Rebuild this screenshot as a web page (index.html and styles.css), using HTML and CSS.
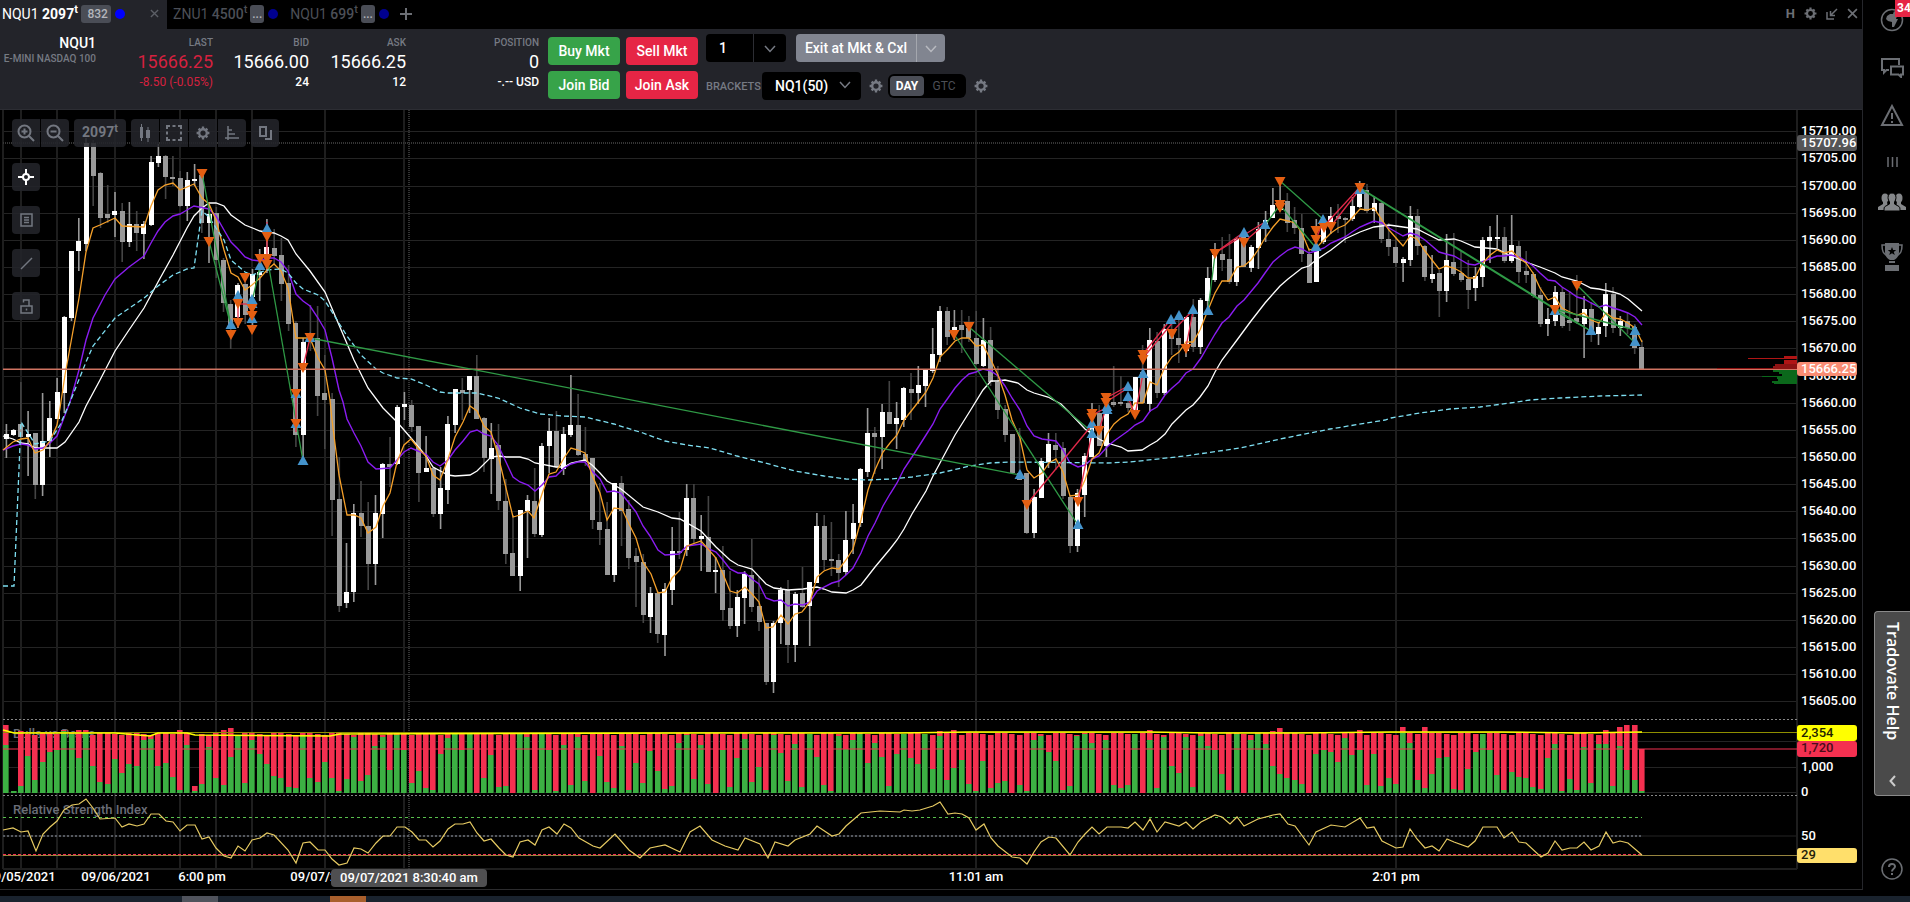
FILE: index.html
```html
<!DOCTYPE html>
<html lang="en">
<head>
    <meta charset="UTF-8">
    <meta name="viewport" content="width=device-width, initial-scale=1.0">
    <title>NQU1 2097t</title>
    <link rel="stylesheet" href="styles.css">
</head>
<body>

    <!-- Shared icon shapes -->
    <svg class="icon-defs" width="0" height="0">
        <symbol id="gear" viewBox="0 0 24 24">
            <path fill="none" stroke="currentColor" stroke-width="4" d="M12 5.500a6.500 6.500 0 1 0 0 13a6.500 6.500 0 1 0 0-13z"/>
            <path fill="none" stroke="currentColor" stroke-width="4" d="M12 1v4M12 19v4M1 12h4M19 12h4M4.500 4.500l2.500 2.500M17 17l2.500 2.500M4.500 19.500l2.500-2.500M17 7l2.500-2.500"/>
        </symbol>
        <symbol id="chevron" viewBox="0 0 12 8">
            <path fill="none" stroke="currentColor" stroke-width="1.500" d="M1 1l5 5.500l5-5.500"/>
        </symbol>
        <symbol id="cross" viewBox="0 0 10 10">
            <path fill="none" stroke="currentColor" stroke-width="1.500" d="M1 1l8 8M9 1l-8 8"/>
        </symbol>
    </svg>

    <div class="app">
        <main class="workspace">
            <nav class="tabs">
                <div class="tab active">
                    <span>NQU1 <b>2097<sup>t</sup></b></span>
                    <span class="count">832</span>
                    <i class="dot"></i>
                    <button class="close" aria-label="Close tab"><svg width="9" height="9"><use href="#cross"/></svg></button>
                </div>
                <div class="tab">
                    <span>ZNU1 <b>4500<sup>t</sup></b></span>
                    <span class="count small">...</span>
                    <i class="dot"></i>
                </div>
                <div class="tab">
                    <span>NQU1 <b>699<sup>t</sup></b></span>
                    <span class="count small">...</span>
                    <i class="dot"></i>
                </div>
                <button class="add" aria-label="Add tab"><svg width="12" height="12" viewBox="0 0 12 12"><path stroke="currentColor" stroke-width="2" d="M6 0v12M0 6h12"/></svg></button>
                <div class="window-tools">
                    <button>H</button>
                    <button aria-label="Settings"><svg width="13" height="13"><use href="#gear"/></svg></button>
                    <button aria-label="Collapse"><svg width="12" height="12" viewBox="0 0 12 12"><path fill="none" stroke="currentColor" stroke-width="1.500" d="M1 4v7h7M11 1L4.500 7.500M4.500 3v4.500H9"/></svg></button>
                    <button aria-label="Close"><svg width="11" height="11"><use href="#cross"/></svg></button>
                </div>
            </nav>

            <header class="ticket">
                <div class="quotes">
                    <div class="quote">
                        <strong>NQU1</strong>
                        <span class="product">E-MINI NASDAQ 100</span>
                    </div>
                    <div class="quote down">
                        <span class="label">LAST</span>
                        <span class="value">15666.25</span>
                        <span class="sub">-8.50 (-0.05%)</span>
                    </div>
                    <div class="quote">
                        <span class="label">BID</span>
                        <span class="value">15666.00</span>
                        <span class="sub">24</span>
                    </div>
                    <div class="quote">
                        <span class="label">ASK</span>
                        <span class="value">15666.25</span>
                        <span class="sub">12</span>
                    </div>
                    <div class="quote">
                        <span class="label">POSITION</span>
                        <span class="value">0</span>
                        <span class="sub">-.-- USD</span>
                    </div>
                </div>

                <div class="orders">
                    <button class="buy">Buy Mkt</button>
                    <button class="sell">Sell Mkt</button>
                    <button class="buy">Join Bid</button>
                    <button class="sell">Join Ask</button>
                </div>

                <div class="options">
                    <div class="row">
                        <div class="qty">
                            <input type="text" value="1" aria-label="Quantity">
                            <button aria-label="Choose quantity"><svg width="12" height="8"><use href="#chevron"/></svg></button>
                        </div>
                        <div class="exit">
                            <button>Exit at Mkt &amp; Cxl</button>
                            <button aria-label="More exit orders"><svg width="12" height="8"><use href="#chevron"/></svg></button>
                        </div>
                    </div>
                    <div class="row">
                        <label class="brackets" for="brackets">BRACKETS</label>
                        <div class="select">
                            <select id="brackets"><option>NQ1(50)</option></select>
                            <svg width="12" height="8"><use href="#chevron"/></svg>
                        </div>
                        <button class="gear" aria-label="Bracket settings"><svg width="14" height="14"><use href="#gear"/></svg></button>
                        <div class="tif">
                            <input type="radio" name="tif" id="tif-day" checked><label for="tif-day">DAY</label>
                            <input type="radio" name="tif" id="tif-gtc"><label for="tif-gtc">GTC</label>
                        </div>
                        <button class="gear" aria-label="Order settings"><svg width="14" height="14"><use href="#gear"/></svg></button>
                    </div>
                </div>
            </header>

            <section class="chart">
                <svg id="plot" viewBox="0 110 1862 779" preserveAspectRatio="xMinYMin meet"></svg>

                <div class="chart-tools">
                    <div class="group">
                        <button aria-label="Zoom in"><svg width="18" height="18" viewBox="0 0 18 18"><g fill="none" stroke="currentColor" stroke-width="2"><circle cx="7.500" cy="7.500" r="6"/><path d="M12 12l5 5M7.500 4.500v6M4.500 7.500h6"/></g></svg></button>
                        <button aria-label="Zoom out"><svg width="18" height="18" viewBox="0 0 18 18"><g fill="none" stroke="currentColor" stroke-width="2"><circle cx="7.500" cy="7.500" r="6"/><path d="M12 12l5 5M4.500 7.500h6"/></g></svg></button>
                    </div>
                    <div class="group">
                        <button class="interval">2097<sup>t</sup></button>
                    </div>
                    <div class="group">
                        <button aria-label="Chart type"><svg width="12" height="18" viewBox="0 0 12 18"><path fill="currentColor" d="M1 3h3v11H1zM2 0h1v17H2zM7 6h4v8H7zM8.500 3h1v15h-1z"/></svg></button>
                        <button aria-label="Select area"><svg width="16" height="16" viewBox="0 0 16 16"><path fill="none" stroke="currentColor" stroke-width="2" d="M1 4V1h3M6.500 1h3M12 1h3v3M15 6.500v3M15 12v3h-3M9.500 15h-3M4 15H1v-3M1 9.500v-3"/></svg></button>
                        <button aria-label="Chart settings"><svg width="14" height="14"><use href="#gear"/></svg></button>
                        <button aria-label="Price levels"><svg width="14" height="14" viewBox="0 0 14 14"><path fill="none" stroke="currentColor" stroke-width="1.500" d="M3 0v14M0 12h14M3 4h4M3 8h7"/></svg></button>
                    </div>
                    <div class="group">
                        <button aria-label="Layers"><svg width="13" height="14" viewBox="0 0 13 14"><path fill="none" stroke="currentColor" stroke-width="2" d="M1 1h6v9H1zM12 4v9H6"/></svg></button>
                    </div>
                </div>

                <div class="draw-tools">
                    <button class="on" aria-label="Crosshair"><svg width="16" height="16" viewBox="0 0 16 16"><g fill="none" stroke="currentColor" stroke-width="2"><circle cx="8" cy="8" r="3"/><path d="M8 0v5M8 11v5M0 8h5M11 8h5"/></g></svg></button>
                    <button aria-label="Data box"><svg width="13" height="14" viewBox="0 0 13 14"><path fill="none" stroke="currentColor" stroke-width="1.500" d="M1 1h11v12H1zM4 4.500h5M4 7h5M4 9.500h5"/></svg></button>
                    <button aria-label="Draw line"><svg width="13" height="13" viewBox="0 0 13 13"><path stroke="currentColor" stroke-width="1.500" d="M1 12L12 1"/></svg></button>
                    <button aria-label="Lock drawings"><svg width="13" height="15" viewBox="0 0 13 15"><path fill="none" stroke="currentColor" stroke-width="1.500" d="M1 7h11v7H1zM3.500 3.500V1h5.500v6M6.500 9.500v2"/></svg></button>
                </div>
            </section>
        </main>

        <aside class="sidebar">
            <button aria-label="News"><svg width="24" height="24" viewBox="0 0 24 24"><circle cx="12" cy="12" r="10.500" fill="none" stroke="currentColor" stroke-width="1.500"/><path fill="currentColor" d="M7 8l3-2h4l3 2l-1 3h2l-2 4l-2 4h-2v-5l-4-1l-2-2zM14 3l3 2l-1 2l-3-1z"/></svg><span class="badge">34</span></button>
            <button aria-label="Chat"><svg width="24" height="20" viewBox="0 0 24 20"><path fill="none" stroke="currentColor" stroke-width="2" d="M19 7V1H2v11h2v2.500l2.500-2.500H9M11 8.500h12v8h-2v2.500l-2.500-2.500H11z"/></svg></button>
            <button aria-label="Alerts"><svg width="24" height="23" viewBox="0 0 24 23"><path fill="none" stroke="currentColor" stroke-width="2" d="M12 2L2 21h20zM12 9v6M12 17v2"/></svg></button>
            <button aria-label="Columns"><svg width="11" height="10" viewBox="0 0 11 10"><path stroke="currentColor" stroke-width="1.500" d="M1 0v10M5.500 0v10M10 0v10"/></svg></button>
            <button class="community" aria-label="Community"><svg width="28" height="18" viewBox="0 0 28 18"><g fill="currentColor"><ellipse cx="7" cy="5" rx="3.500" ry="4.500"/><ellipse cx="21" cy="5" rx="3.500" ry="4.500"/><path d="M0 17v-3l5-3V8h4l1 9zM28 17v-3l-5-3V8h-4l-1 9z"/></g><path fill="currentColor" stroke="#000" stroke-width="1" d="M14 0c2.500 0 4 1.800 4 4.500c0 2-1 3.500-1.500 4.500v2l4.500 2.500c.8.500 1 1.500 1 4.500H6c0-3 .2-4 1-4.500l4.500-2.500V9C11 8 10 6.500 10 4.500C10 1.800 11.500 0 14 0z"/></svg></button>
            <button class="trophy" aria-label="Contests"><svg width="22" height="28" viewBox="0 0 22 28"><path fill="none" stroke="currentColor" stroke-width="1.500" d="M4 2H1c0 6 1 9 6 11M18 2h3c0 6-1 9-6 11"/><path fill="currentColor" d="M4 0h14v9c0 5-3 7-5 8h-4c-2-1-5-3-5-8zM8 18h6v2H8zM4 22h14v6H4z"/><path fill="#000" d="M11 4l1.200 3h3l-2.400 2l1 3l-2.800-1.800L8.200 12l1-3l-2.400-2h3z"/></svg></button>
            <button class="help-tab">Tradovate Help<svg width="7" height="12" viewBox="0 0 7 12"><path fill="none" stroke="#ccc" stroke-width="2" d="M6 1L1.500 6L6 11"/></svg></button>
            <button class="question" aria-label="Help"><svg width="22" height="22" viewBox="0 0 22 22"><g fill="none" stroke="currentColor"><circle cx="11" cy="11" r="10" stroke-width="1.500"/><path stroke-width="2" d="M8 9c0-4 6-4 6-.5c0 2.500-3 2-3 5M11 15v2"/></g></svg></button>
        </aside>
    </div>

    <footer class="taskbar">
        <span class="task"></span>
        <span class="task orange"></span>
    </footer>

    <script src="chart.js"></script>
</body>
</html>
```

FILE: styles.css
```css
* {
    box-sizing: border-box;
}

body {
    margin: 0;
    min-height: 100vh;
    display: flex;
    flex-direction: column;
    background: #000;
    color: #fff;
    font-family: Roboto, "Liberation Sans", sans-serif;
    font-size: 14px;
    overflow: hidden;
}

button, input, select {
    font: inherit;
    color: inherit;
    border: none;
    padding: 0;
    margin: 0;
    background: none;
}

.icon-defs {
    position: absolute;
}

.app {
    flex: 1;
    display: flex;
}

.workspace {
    flex: 1;
    min-width: 0;
    border-right: 1px solid #25262b;
    border-bottom: 1px solid #2c2c2e;
}

/* Tabs */
.tabs {
    height: 29px;
    display: flex;
    align-items: stretch;
    color: #4c4f57;
}

.tab {
    display: flex;
    align-items: center;
    gap: 3px;
    padding: 0 0 2px 12px;
}

.tab:nth-child(2) {
    padding-left: 6px;
}

.tab b {
    font-weight: 500;
}

.tab sup {
    font-size: 11px;
    line-height: 0;
}

.tab.active {
    width: 167px;
    padding-left: 2px;
    background: #23242a;
    color: #fff;
}

.active b {
    font-weight: 700;
}

.count {
    height: 18px;
    width: 30px;
    padding-right: 3px;
    border-radius: 3px;
    background: #4a4d56;
    color: #b4b6bc;
    font-size: 12px;
    font-weight: 500;
    line-height: 18px;
    text-align: right;
}

.count.small {
    width: 14px;
    padding: 0;
    text-align: center;
}

.dot {
    width: 10px;
    height: 10px;
    margin-left: 1px;
    border-radius: 50%;
    background: #000090;
}

.active .dot {
    background: #0000ff;
}

.close {
    display: flex;
    margin: 0 8px 0 auto;
    color: #5c5f66;
}

.add {
    display: flex;
    align-items: center;
    margin-left: 11px;
    padding-bottom: 2px;
    color: #6c6f75;
}

.window-tools {
    display: flex;
    align-items: center;
    gap: 9px;
    margin-left: auto;
    padding: 0 4px 2px 0;
    color: #6c6f75;
}

.window-tools button {
    display: flex;
    font-size: 13px;
    font-weight: 700;
}

/* Order ticket */
.ticket {
    height: 81px;
    display: flex;
    background: #23242a;
    border-bottom: 1px solid #2c2d33;
}

.quotes {
    display: grid;
    grid-template-columns: 96px 117px 96px 97px 133px;
    padding-top: 5px;
    font-weight: 500;
}

.quote {
    display: flex;
    flex-direction: column;
    align-items: flex-end;
    white-space: nowrap;
}

.quote strong {
    line-height: 18px;
    font-weight: 500;
}

.product, .label {
    color: #767a83;
    font-size: 10px;
}

.product {
    line-height: 14px;
}

.label {
    line-height: 18px;
}

.value {
    font-size: 18px;
    font-weight: 400;
    line-height: 20px;
}

.sub {
    font-size: 12px;
    line-height: 20px;
}

.down .value, .down .sub {
    color: #d5213f;
    font-weight: 400;
}

.orders {
    display: grid;
    grid-template-columns: 72px 72px;
    grid-auto-rows: 28px;
    gap: 6px;
    padding: 8px 8px 0 9px;
    font-weight: 500;
}

.orders button {
    border-radius: 4px;
}

.buy {
    background: #37a349;
}

.sell {
    background: #e62545;
}

.options {
    display: flex;
    flex-direction: column;
    gap: 10px;
    padding-top: 5px;
}

.row {
    display: flex;
    align-items: center;
    height: 28px;
}

.qty, .exit {
    display: flex;
    height: 28px;
    border-radius: 4px;
    overflow: hidden;
    font-weight: 500;
}

.qty {
    margin-right: 10px;
    background: #000;
    color: #767a83;
}

.qty input {
    width: 48px;
    padding-left: 13px;
    border-right: 1px solid #2c2d33;
    color: #fff;
}

.qty button {
    width: 32px;
}

.exit {
    background: #818590;
}

.exit button:first-child {
    width: 121px;
    border-right: 1px solid #a4a7ae;
}

.exit button:last-child {
    width: 28px;
    color: #b8bac0;
}

.brackets {
    width: 56px;
    color: #767a83;
    font-size: 11px;
    font-weight: 500;
}

.select {
    position: relative;
    color: #767a83;
}

.select select {
    width: 99px;
    height: 28px;
    padding-left: 13px;
    border-radius: 4px;
    appearance: none;
    background: #000;
    color: #fff;
    font-weight: 500;
}

.select svg {
    position: absolute;
    top: 9px;
    right: 10px;
    pointer-events: none;
}

.gear {
    display: flex;
    padding: 0 5px 0 8px;
    color: #767a83;
}

.tif {
    display: flex;
    width: 78px;
    height: 24px;
    padding: 2px;
    border-radius: 6px;
    background: #000;
    font-size: 12px;
}

.tif input {
    position: absolute;
    opacity: 0;
}

.tif label {
    flex: 1;
    border-radius: 4px;
    color: #4c4f57;
    line-height: 20px;
    text-align: center;
}

.tif input:checked + label {
    flex: 0 0 34px;
    background: #4a4d56;
    color: #fff;
    font-weight: 700;
}

/* Chart */
.chart {
    position: relative;
}

#plot {
    display: block;
    width: 100%;
    font-size: 13px;
    font-weight: 500;
    fill: #fff;
}

.chart-tools, .draw-tools {
    position: absolute;
    top: 9px;
    left: 12px;
    display: flex;
    gap: 5px;
    color: #737780;
}

.draw-tools {
    top: 53px;
    flex-direction: column;
    gap: 15px;
}

.group {
    display: flex;
    gap: 1px;
    border-radius: 4px;
    overflow: hidden;
}

.chart-tools button, .draw-tools button {
    display: flex;
    align-items: center;
    justify-content: center;
    width: 28px;
    height: 28px;
    background: rgba(35, 36, 42, 0.88);
}

.draw-tools button {
    border-radius: 4px;
}

.draw-tools .on {
    color: #fff;
}

.chart-tools .interval {
    width: 52px;
    padding-bottom: 2px;
    font-size: 14px;
    font-weight: 700;
}

.interval sup {
    align-self: flex-start;
    font-size: 11px;
    line-height: 20px;
}

/* Right sidebar */
.sidebar {
    width: 47px;
    display: flex;
    flex-direction: column;
    align-items: center;
    padding: 8px 0 0 11px;
    color: #6b6e73;
    overflow: hidden;
}

.sidebar button {
    position: relative;
    display: flex;
    flex: none;
    margin-bottom: 26px;
}

.sidebar button:nth-child(3) {
    margin-bottom: 30px;
}

.badge {
    position: absolute;
    top: -8px;
    left: 15px;
    height: 17px;
    padding: 0 2px;
    background: #e62545;
    color: #fff;
    font-size: 12px;
    font-weight: 700;
    line-height: 17px;
}

.sidebar .community {
    margin-bottom: 32px;
    color: #85878a;
}

.sidebar .help-tab {
    width: 36px;
    height: 185px;
    margin: auto 0 62px;
    padding: 10px 0 8px;
    align-items: center;
    justify-content: space-between;
    flex-direction: row;
    writing-mode: vertical-rl;
    border: 1px solid #8a8a8a;
    border-right: none;
    border-radius: 4px 0 0 4px;
    background: #4a4a4a;
    color: #fff;
    font-family: "Open Sans", sans-serif;
    font-size: 16px;
    font-weight: 600;
}

.sidebar .question {
    margin-bottom: 10px;
}

.taskbar {
    display: flex;
    gap: 112px;
    height: 6px;
    margin-top: 6px;
    padding-left: 182px;
    background: #1a232e;
}

.task {
    width: 36px;
    background: #50535c;
}

.task.orange {
    background: #a95f2c;
}
```

FILE: chart.js
```js
// One candle per entry: colour (w = up, g = down), high, body top, body bottom, low
const candles = `
w424,434,439,458 w429,430,435,436 g382,424,437,443 w411,434,437,476 g433,433,485,499 w393,441,485,496 w401,418,441,457 w378,392,419,419 w316,317,393,413 w251,251,318,321
w218,241,251,271 w138,143,244,251 g140,143,176,206 g172,173,218,228 g185,214,218,223 w192,211,215,237 g203,211,242,262 w202,224,242,247 g211,224,233,251 w221,224,234,259
w156,162,225,226 w144,156,163,167 g155,156,177,199 g156,177,179,186 g171,178,206,207 w172,180,206,221 w164,179,181,186 g173,175,223,233 w204,214,223,263 g207,213,260,278
g258,260,303,312 g300,304,325,349 w283,285,317,328 g278,284,315,324 w269,274,297,330 w249,272,275,301 w219,247,258,273 g229,248,256,265 g238,255,284,301 g265,283,324,331
g321,323,435,447 w338,342,435,457 g305,335,342,351 g306,338,396,416 g355,393,400,449 g393,399,500,536 g457,499,606,612 w543,592,603,608 w504,513,592,602 g481,513,526,537
g502,526,564,590 w495,513,564,585 w463,464,514,538 g437,464,467,487 w405,407,464,465 w392,404,407,420 g400,405,427,432 g426,426,473,502 w436,468,472,472 g467,468,514,517
w467,488,514,529 w416,424,490,504 w389,389,425,433 g378,390,393,420 w376,376,390,413 g355,376,419,419 g417,418,458,472 w423,448,459,494 g424,445,501,510 g479,501,554,564
g515,553,576,576 w510,510,576,591 w495,500,511,558 g468,501,534,537 w443,446,535,537 w418,431,446,473 g411,431,467,468 w427,434,469,475 w375,425,435,437 g394,425,455,456
g427,454,460,466 g458,458,520,529 g483,522,530,545 g502,529,575,575 w483,483,575,582 g476,483,511,546 g500,509,558,569 g548,556,562,607 g554,562,615,623 w587,593,617,633
g591,593,634,643 w583,589,635,656 w527,551,590,605 g512,551,553,559 w484,498,550,556 g484,498,539,543 w515,536,539,571 g496,537,572,572 w557,570,572,593 g546,570,610,621
g571,608,626,629 w590,597,626,637 w571,574,598,624 g539,575,607,612 g577,606,622,631 g623,623,682,685 w621,623,682,693 w587,590,623,644 g580,590,645,663 w592,594,645,662
g567,593,607,608 w582,582,606,646 w513,526,583,583 g515,526,560,570 g522,559,561,576 g554,560,573,587 w511,540,572,575 w504,523,539,554 w468,469,523,527 w408,433,472,477
g427,433,437,474 w404,412,437,469 g381,412,424,424 w402,418,424,449 w387,388,420,427 g373,389,393,420 w366,385,393,404 w370,370,386,407 w328,354,371,373 w306,311,355,362
g307,311,337,345 w310,327,333,340 g310,325,330,353 g316,328,338,342 g311,338,364,365 w318,340,366,367 g327,340,382,386 g366,382,410,419 g405,409,435,442 g434,434,473,473
g428,473,480,480 g473,473,533,534 w489,497,533,538 w458,461,498,498 w433,444,462,468 g433,445,450,470 g442,448,496,499 g495,497,546,553 w489,493,546,552 w453,456,495,517
w403,427,457,457 g405,413,446,446 w408,412,446,457 g366,402,405,407 g376,402,404,406 g393,403,408,412 w377,377,410,412 g345,372,403,403 w328,340,404,412 g332,341,393,398
w324,329,393,395 g322,330,339,355 g319,338,345,363 w317,317,351,357 g299,317,347,352 w298,300,347,354 w267,278,301,310 w243,255,280,282 g237,254,260,271 g234,259,282,284
w237,239,282,286 g233,235,267,267 w245,247,268,272 w222,229,248,269 w211,220,229,242 w188,205,218,218 w180,203,210,210 g193,201,223,232 g207,220,228,234 g214,228,254,262
g248,254,283,283 w219,247,282,282 w218,227,242,244 w207,216,227,234 g204,216,219,233 g217,218,220,243 w197,206,219,221 w181,190,207,208 g184,190,211,213 w196,203,211,223
g202,203,239,243 g223,239,247,256 g237,247,263,267 w257,259,263,282 w206,216,260,266 g209,216,246,255 g245,246,277,281 w255,274,279,283 g270,273,291,317 w234,260,291,302
g233,262,274,276 g250,273,280,282 g260,279,290,309 w267,276,288,301 w237,240,277,287 w226,237,241,263 w215,237,239,248 g227,237,261,263 w215,245,261,263 g241,246,272,283
g251,271,275,283 g272,274,296,298 g287,295,324,327 w308,319,324,336 w286,292,321,326 g287,292,326,328 g291,320,323,331 g275,318,322,324 w296,309,324,358 g302,309,330,342
w322,327,334,345 w283,294,326,337 g287,294,328,333 w316,321,328,336 g313,321,328,334 g324,327,348,354 g340,347,370,370`.trim().split(/\s+/);

// Moving averages
const fastMa = "3,450 13,442 21,439 28,438 35,453 43,450 50,441 57,425 60,408 65,375 79,298 86,252 93,228 100,225 115,218 122,226 144,227 151,206 158,190 165,185 173,183 180,190 194,184 202,198 209,204 216,220 224,250 231,273 238,277 245,290 252,285 260,278 267,270 274,264 281,271 288,288 296,338 310,338 318,358 325,370 330,400 332,420 339,475 347,515 354,515 361,518 368,533 376,527 383,506 390,493 397,462 404,445 411,439 418,448 426,456 433,475 440,480 448,459 455,437 463,422 470,406 477,411 484,426 491,432 498,455 513,517 520,515 528,511 534,518 542,494 549,474 556,472 564,458 571,448 578,450 585,453 592,475 600,493 607,520 614,508 622,509 629,524 636,538 643,562 651,574 658,593 665,592 672,578 680,570 687,546 701,541 709,550 716,558 723,574 730,591 737,593 745,587 752,594 759,602 766,628 773,627 781,615 788,624 795,614 802,612 810,602 817,577 824,571 832,568 839,569 846,560 853,549 861,520 868,490 875,470 883,452 890,443 897,435 904,420 912,410 919,401 926,392 933,378 940,357 948,349 955,341 962,338 969,338 976,346 983,345 991,360 998,375 1005,395 1012,420 1020,438 1027,470 1034,478 1042,473 1049,463 1056,459 1063,472 1070,496 1078,495 1085,480 1092,459 1099,453 1107,434 1114,424 1121,418 1128,414 1135,403 1143,403 1150,382 1157,385 1165,367 1172,357 1179,352 1186,342 1193,342 1200,330 1208,310 1215,293 1222,281 1229,281 1237,267 1244,266 1251,260 1258,250 1265,238 1273,227 1280,219 1288,221 1295,223 1302,233 1309,250 1316,248 1324,240 1331,233 1338,228 1345,225 1352,218 1360,209 1367,210 1374,208 1382,220 1389,230 1396,238 1403,246 1410,236 1417,239 1425,251 1432,260 1439,269 1446,266 1454,268 1461,272 1468,278 1475,278 1482,264 1489,256 1497,250 1504,253 1512,251 1519,258 1526,263 1533,273 1540,288 1548,300 1555,297 1562,308 1570,312 1577,315 1584,313 1591,320 1599,323 1606,313 1613,318 1620,319 1628,323 1635,328 1642,342";
const midMa = "3,450 13,446 21,444 28,445 35,449 43,448 50,443 57,436 65,415 70,402 79,370 86,340 93,318 105,295 115,279 129,267 144,256 151,243 158,231 165,222 173,216 180,214 187,210 194,206 209,209 216,216 224,230 231,242 238,249 245,257 252,260 260,261 267,258 274,258 281,262 288,271 296,294 303,301 310,306 318,318 325,330 332,358 339,390 343,402 347,419 354,433 361,446 368,462 376,469 390,468 397,460 404,452 411,448 418,451 426,454 433,462 440,466 448,460 455,450 463,441 470,432 477,430 484,434 491,436 498,445 506,462 513,477 520,482 528,485 535,491 542,485 549,477 556,476 564,468 571,464 578,462 585,462 592,471 600,479 607,492 614,491 621,493 629,503 636,512 643,526 650,536 658,550 665,555 679,554 687,546 701,544 709,549 716,552 723,560 730,569 738,573 745,573 752,579 759,584 766,598 774,601 781,600 788,606 795,604 803,605 810,602 817,591 824,587 832,583 839,581 846,575 853,568 861,553 868,536 875,523 883,506 890,494 897,483 904,469 912,457 919,446 926,435 933,424 940,409 948,398 955,388 962,380 969,374 976,372 983,369 991,371 998,376 1005,386 1012,398 1020,410 1027,426 1034,436 1042,439 1056,441 1063,450 1070,463 1078,467 1085,465 1092,459 1099,456 1107,447 1114,441 1121,436 1128,431 1135,425 1143,421 1150,411 1157,407 1165,395 1172,388 1179,382 1186,373 1193,369 1201,358 1208,346 1215,334 1222,323 1229,317 1237,306 1244,300 1258,283 1265,273 1273,262 1280,256 1288,250 1295,247 1302,249 1309,253 1316,251 1324,248 1331,243 1338,240 1345,237 1352,232 1360,227 1367,224 1374,221 1382,223 1389,228 1396,232 1403,236 1410,233 1417,235 1425,240 1432,246 1439,252 1446,254 1454,256 1461,260 1468,264 1475,265 1482,262 1489,259 1497,256 1504,256 1511,255 1519,257 1526,261 1533,266 1540,273 1548,280 1555,281 1562,287 1570,292 1577,297 1584,299 1591,303 1599,307 1606,305 1613,308 1620,310 1628,313 1635,317 1642,325";
const slowMa = "3,436 13,439 21,443 28,444 35,448 57,448 65,442 79,422 86,406 100,380 115,351 129,330 144,308 158,282 173,255 187,228 194,216 202,208 209,203 216,203 224,206 231,215 245,225 260,231 274,233 281,236 288,240 296,254 310,271 325,292 339,325 354,360 368,388 383,408 397,422 411,438 426,456 433,467 448,475 455,476 470,475 477,471 491,457 499,456 506,457 520,457 528,459 535,463 556,467 564,467 571,463 585,460 592,465 600,473 607,481 621,489 643,507 658,512 672,518 680,519 701,531 716,547 730,560 738,565 752,569 766,584 774,588 788,590 803,589 817,587 824,589 832,592 846,593 853,590 861,585 875,567 890,549 897,540 904,529 912,514 926,491 933,476 948,448 955,435 970,411 983,390 991,381 998,381 1005,380 1018,383 1027,390 1034,393 1048,397 1061,404 1070,413 1085,429 1099,439 1107,443 1121,447 1128,451 1142,450 1150,445 1157,441 1165,434 1172,424 1186,410 1193,405 1200,397 1208,386 1215,372 1222,360 1237,340 1251,321 1265,303 1280,286 1288,279 1302,268 1309,266 1316,260 1331,250 1345,239 1360,232 1374,227 1389,225 1396,226 1417,229 1425,233 1439,240 1454,239 1461,241 1475,247 1497,249 1511,256 1526,262 1540,267 1555,273 1562,277 1577,281 1591,288 1599,289 1613,292 1620,294 1628,299 1642,311";
const vwap = "3,586 14,586 21,422 35,444 50,441 60,425 70,402 86,362 93,346 115,318 144,298 158,286 173,275 187,269 194,268 202,211 209,217 216,228 224,240 231,260 245,272 252,275 267,270 281,269 288,273 296,283 303,289 318,295 325,301 332,312 347,336 361,355 376,369 383,373 397,378 411,379 426,385 440,392 448,393 477,393 498,398 520,408 540,414 563,416 585,417 614,424 643,433 665,441 687,445 710,448 737,456 765,463 795,471 824,476 846,479 868,480 890,479 912,477 940,473 970,466 990,463 1010,462 1107,463 1130,462 1185,456 1240,448 1285,438 1330,429 1385,420 1391,418 1420,413 1450,409 1480,407 1510,403 1530,400 1560,398 1600,396 1642,395";

// Trades: x1,y1,x2,y2
const wins = ["202,173 231,326", "209,241 231,326", "252,302 260,266", "268,262 303,461", "310,338 1020,475", "954,334 1078,525", "969,327 1092,432", "1208,310 1215,255", "1265,225 1280,205", "1280,181 1324,220", "1280,205 1316,248", "1577,285 1635,343", "1555,309 1591,331", "1555,309 1635,330", "1591,331 1555,311"];
const losses = ["303,367 310,338", "296,432 296,395", "238,320 238,296", "238,304 252,304", "267,222 267,258", "1027,504 1092,425", "1078,501 1092,433", "1092,415 1106,408", "1099,430 1106,408", "1106,398 1128,386", "1106,402 1128,388", "1128,397 1135,415", "1135,415 1143,374", "1143,354 1171,319", "1143,358 1179,315", "1172,332 1193,310", "1186,347 1193,311", "1215,253 1244,232", "1215,253 1265,222", "1244,242 1265,224", "1316,239 1323,222", "1324,226 1360,187", "1331,226 1360,189"];
const buys = "231,325 238,296 252,300 252,304 252,319 260,266 267,229 296,394 296,424 303,461 310,338 1020,475 1078,525 1092,424 1092,434 1107,410 1107,407 1128,387 1128,397 1143,374 1171,320 1179,316 1193,310 1208,311 1244,233 1265,225 1316,247 1323,220 1360,190 1555,311 1591,331 1635,331 1635,342";
const sells = "202,173 209,241 231,334 238,303 238,322 245,277 252,308 252,315 252,329 260,258 267,236 267,258 267,264 310,337 303,367 296,393 296,423 954,334 969,326 1027,504 1078,501 1092,413 1092,417 1099,430 1106,397 1106,402 1135,414 1143,354 1143,359 1172,333 1186,348 1215,253 1244,242 1280,181 1280,204 1280,207 1316,230 1316,239 1324,227 1331,226 1360,187 1555,309 1577,285";

// Bulls vs Bears: bull share of every bar
const bulls = [48, 2, 7, 37, 13, 31, 41, 43, 62, 59, 35, 60, 27, 11, 9, 34, 20, 29, 27, 53, 54, 27, 30, 16, 3, 48, 2, 9, 46, 15, 8, 36, 57, 10, 53, 39, 29, 17, 15, 6, 5, 58, 15, 11, 31, 15, 2, 14, 56, 12, 18, 47, 56, 23, 58, 43, 10, 22, 5, 3, 39, 55, 59, 43, 59, 0, 15, 38, 6, 7, 0, 59, 56, 3, 59, 43, 2,
    48, 8, 56, 12, 0, 37, 11, 5, 47, 3, 30, 10, 42, 22, 4, 7, 50, 58, 14, 48, 9, 0, 43, 6, 35, 54, 11, 26, 3, 58, 40, 12, 49, 6, 59, 36, 8, 2, 57, 44, 53, 59, 30, 50, 36, 7, 39,
    59, 35, 29, 59, 24, 57, 13, 25, 33, 9, 2, 32, 5, 10, 12, 0, 8, 2, 53, 57, 41, 32, 3, 7, 57, 59, 50, 0, 53, 8, 5, 8, 59, 0, 53, 5, 56, 27, 20, 56, 6, 57, 47, 43, 19, 3, 59, 0, 53, 59, 49, 27, 19, 15, 13, 9, 0, 39, 43, 41, 31, 55, 38, 43, 8, 39, 7, 15, 9, 60, 50, 13, 5, 19, 35, 36, 4, 3, 24, 41, 59, 43, 18,
    3, 21, 16, 15, 6, 4, 35, 49, 2, 14, 3, 46, 10, 49, 49, 7, 47, 23, 13, 2];
const totals = {0: 68, 1: 2, 2: 62, 8: 63, 10: 63, 11: 63, 24: 63, 26: 7, 30: 63, 31: 65, 47: 59, 72: 61, 129: 62, 131: 63, 158: 63, 175: 62, 176: 65, 187: 63, 193: 66, 196: 66, 221: 63, 223: 66, 224: 68, 225: 68, 226: 44};

const rsi = "3,830 13,828 21,832 28,831 36,851 43,834 50,827 57,821 64,810 72,805 79,804 86,799 93,808 100,819 115,818 122,827 129,824 137,826 144,824 151,814 159,814 166,821 173,822 180,831 187,825 195,825 202,839 209,837 216,848 224,856 231,858 238,846 245,851 252,840 260,838 267,833 274,835 288,850 296,863 303,843 310,842 318,850 325,850 332,859 339,865 347,863 354,848 361,849 368,853 376,843 383,836 390,836 397,827 405,827 412,832 419,840 426,840 433,847 440,841 448,829 455,824 463,824 470,822 477,833 484,841 491,839 499,848 506,855 513,857 520,842 528,840 535,845 542,830 549,827 557,834 564,824 571,828 579,838 593,846 600,848 615,834 629,850 640,858 650,848 665,845 680,852 690,832 700,826 712,840 725,846 738,850 745,838 760,844 768,858 775,842 788,846 795,840 810,834 817,826 832,836 839,834 846,826 853,820 861,813 880,811 900,812 904,810 912,811 920,810 933,806 940,802 948,814 955,813 962,814 969,818 976,830 984,824 991,838 998,846 1012,857 1020,858 1027,864 1034,852 1041,842 1049,837 1056,838 1070,855 1078,842 1085,834 1092,827 1099,834 1107,827 1121,827 1128,828 1135,822 1143,830 1150,819 1157,832 1165,822 1179,826 1186,822 1193,829 1201,822 1215,815 1222,817 1230,824 1237,817 1244,826 1258,819 1273,815 1280,814 1288,824 1295,826 1309,845 1316,832 1331,825 1345,827 1360,818 1367,828 1374,827 1382,841 1396,848 1403,847 1410,829 1417,839 1425,848 1432,846 1439,851 1447,839 1454,842 1468,847 1475,841 1483,827 1497,827 1504,838 1512,832 1519,842 1526,843 1541,857 1548,853 1555,841 1562,850 1570,848 1577,848 1584,842 1591,850 1599,846 1606,832 1613,843 1620,841 1628,843 1642,855";

const LEFT = 3;
const RIGHT = 1797;
const LAST_X = 1642;
const out = [];

const barX = i => 6.4 + i * 7.237;
const priceY = p => 185.5 + (15700 - p) * 5.43;

function rect(x, y, w, h, fill, extra = "") {
    out.push(`<rect x="${x}" y="${y}" width="${w}" height="${h}" fill="${fill}" ${extra}/>`);
}
function line(x1, y1, x2, y2, color, width = 1, extra = "") {
    out.push(`<line x1="${x1}" y1="${y1}" x2="${x2}" y2="${y2}" stroke="${color}" stroke-width="${width}" ${extra}/>`);
}
function poly(points, color, width = 1, extra = "") {
    out.push(`<polyline points="${points}" fill="none" stroke="${color}" stroke-width="${width}" ${extra}/>`);
}
function text(x, y, value, extra = "") {
    out.push(`<text x="${x}" y="${y + 5}" ${extra}>${value}</text>`);
}

// Grid and price labels
for (let p = 15710; p >= 15605; p -= 5) {
    const y = Math.round(priceY(p)) + 0.5;
    line(LEFT, y, RIGHT, y, "#242424");
    text(1801, Math.round(priceY(p)) - 1, p.toFixed(2));
}
[741.5, 767.5, 792.5, 836].forEach(y => line(LEFT, y, RIGHT, y, "#242424"));
[3, 21, 57, 115, 180, 216, 252, 325, 404, 976, 1396, RIGHT].forEach(x => line(x, 110, x, 869, "#1e1e1e", 2));
line(LEFT, 869, RIGHT, 869, "#1e1e1e", 2);
line(LEFT, 143, RIGHT, 143, "#343434", 2, 'stroke-dasharray="1 1"');
line(409, 110, 409, 869, "#343434", 2, 'stroke-dasharray="1 1"');

// Candles
candles.forEach((c, i) => {
    const [high, top, bottom, low] = c.slice(1).split(",").map(Number);
    const up = c[0] === "w";
    const x = barX(i);
    rect((x - 0.8).toFixed(1), high, 1.6, low - high, up ? "#999" : "#444");
    rect(Math.round(x - 2.5), top, 5, Math.max(bottom - top, 2), up ? "#fff" : "#999");
});

poly(slowMa, "#fff", 1.3);
poly(midMa, "#8a1cf0", 1.4);
poly(fastMa, "#f5a02a", 1.3);
poly(vwap, "#7edff2", 1.3, 'stroke-dasharray="5 3"');
line(LEFT, 369.2, RIGHT, 369.2, "#d07462", 1.4);

wins.forEach(p => poly(p, "#2f9a46", 1.3));
poly("1360,188 1555,309", "#2f9a46", 2);
losses.forEach(p => poly(p, "#e2294a", 1.3));
buys.split(" ").forEach(p => {
    const [x, y] = p.split(",").map(Number);
    out.push(`<path d="M${x - 5.5} ${y + 4}h11l-5.5 -10z" fill="#4493cb"/>`);
});
sells.split(" ").forEach(p => {
    const [x, y] = p.split(",").map(Number);
    out.push(`<path d="M${x - 5.5} ${y - 4}h11l-5.5 10z" fill="#e45f12"/>`);
});

// Order book depth
[[356, 1784], [358, 1748], [360, 1784], [362, 1784], [364, 1775], [366, 1773], [368, 1717]].forEach(([y, x]) => {
    rect(x, y, RIGHT - x, y === 358 || y === 368 ? 1 : 2, y > 362 ? "#8d1313" : "#b01515");
});
[[370, 1773], [372, 1779], [374, 1782], [376, 1762], [377, 1777], [379, 1778], [381, 1772], [382, 1774]].forEach(([y, x]) => {
    rect(x, y, RIGHT - x, y === 376 ? 1 : 2, "#0b681b");
});

// Bulls vs Bears
text(13, 733, "Bulls vs Bears", 'fill="#6b6e78"');
bulls.forEach((bull, i) => {
    const total = totals[i] || Math.max(58 + (i * 7) % 4, bull);
    const x = Math.round(barX(i) - 3);
    rect(x, 793 - total, 6, total, "#8c1e30");
    rect(x, 793 - total, 5, total, "#f43050");
    rect(x, 793 - bull, 6, bull, "#27702a");
    rect(x, 793 - bull, 5, bull, "#3cb043");
});
line(LEFT, 749, RIGHT, 749, "#f43050", 2, 'opacity="0.5"');
line(LEFT, 732.5, RIGHT, 732.5, "#8f8f00");
poly("3,730 7,731 14,733 115,733 138,735 150,736 158,733 187,733 195,735 330,736 340,734 700,733 900,733 970,732 1150,732 1210,733 1300,733 1390,732 1500,732 1580,733 1642,732", "#ff0", 1.5);

// Relative Strength Index
text(13, 809, "Relative Strength Index", 'fill="#6b6e78"');
line(LEFT, 719.5, RIGHT, 719.5, "#888", 1, 'stroke-dasharray="2 2"');
line(LEFT, 795.5, RIGHT, 795.5, "#888", 1, 'stroke-dasharray="2 2"');
line(LEFT, 817.5, LAST_X, 817.5, "#58c04c", 1, 'stroke-dasharray="3 3"');
line(LEFT, 836, LAST_X, 836, "#555960", 2, 'stroke-dasharray="2 2"');
line(LEFT, 855.5, RIGHT, 855.5, "#97853f");
line(LEFT, 854.5, LAST_X, 854.5, "#f43050", 1, 'stroke-dasharray="3 2"');
poly(rsi, "#e6ca62", 1.2);

// Axis labels
text(1801, 766, "1,000");
text(1801, 791, "0");
text(1801, 835, "50");
rect(RIGHT, 135, 60, 16, "#555557", 'rx="3"');
text(1801, 142, "15707.96");
rect(RIGHT, 362, 60, 14, "#f98d74", 'rx="3"');
text(1801, 368, "15666.25");
rect(RIGHT, 741, 60, 16, "#f43050", 'rx="3"');
text(1801, 747, "1,720", 'fill="#4a0c18"');
rect(RIGHT, 725, 60, 16, "#ff0", 'rx="3"');
text(1801, 732, "2,354", 'fill="#222200"');
rect(RIGHT, 848, 60, 15, "#ffdf6b", 'rx="3"');
text(1801, 854, "29", 'fill="#22200a"');

[[21, "09/05/2021"], [116, "09/06/2021"], [202, "6:00 pm"], [325, "09/07/2021"], [976, "11:01 am"], [1396, "2:01 pm"]].forEach(([x, label]) => {
    text(x, 876, label, 'text-anchor="middle"');
});
rect(331, 869, 156, 18, "#4f4f51", 'rx="4"');
text(409, 877, "09/07/2021 8:30:40 am", 'text-anchor="middle"');

document.getElementById("plot").innerHTML = out.join("");
```
